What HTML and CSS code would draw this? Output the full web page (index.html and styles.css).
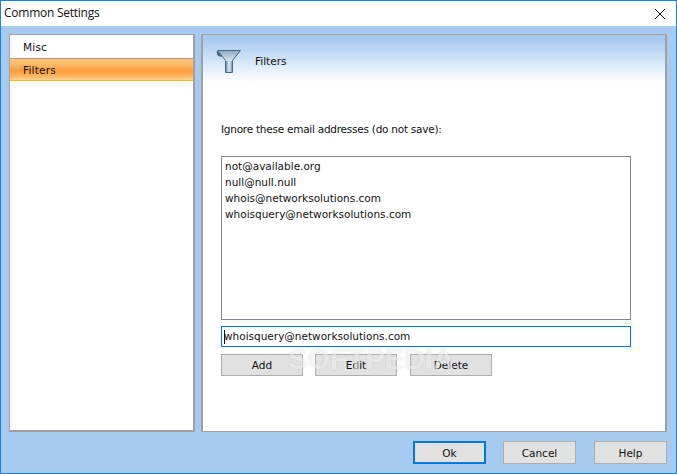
FILE: index.html
```html
<!DOCTYPE html>
<html lang="en">
<head>
<meta charset="utf-8">
<title>Common Settings</title>
<link rel="stylesheet" href="styles.css">
</head>
<body>
<div class="dialog">
  <header class="titlebar">
    <span class="title">Common Settings</span>
    <svg class="close" width="10" height="10" viewBox="0 0 10 10"><path d="M0 0L10 10M10 0L0 10" stroke="#111" stroke-width="1" fill="none"/></svg>
  </header>
  <div class="body">
    <div class="panels">
      <nav class="nav">
        <div class="nav-item">Misc</div>
        <div class="nav-item selected">Filters</div>
      </nav>
      <main class="page">
        <div class="page-head">
          <svg class="funnel" width="26" height="25" viewBox="0 0 26 25">
            <defs>
              <linearGradient id="cone" x1="0" y1="0" x2="0" y2="1"><stop offset="0" stop-color="#8fa9c2"/><stop offset="0.5" stop-color="#dfe8f1"/><stop offset="1" stop-color="#b6c8d9"/></linearGradient>
              <linearGradient id="stem" x1="0" y1="0" x2="1" y2="0"><stop offset="0" stop-color="#6f8ca8"/><stop offset="0.5" stop-color="#e4ecf3"/><stop offset="1" stop-color="#86a0b8"/></linearGradient>
            </defs>
            <path d="M1.5 1.5H24.5L16.5 11.5V23.5H9.5V11.5Z" fill="url(#cone)" stroke="#456a8c" stroke-width="1"/>
            <path d="M10 12H16V23H10Z" fill="url(#stem)"/>
            <path d="M1 2C0 5 2 8 6 8L3 3.5Z" fill="#3f6386"/>
          </svg>
          <span class="page-title">Filters</span>
        </div>
        <div class="page-body">
          <p class="label">Ignore these email addresses (do not save):</p>
          <ul class="list">
            <li>not@available.org</li>
            <li>null@null.null</li>
            <li>whois@networksolutions.com</li>
            <li>whoisquery@networksolutions.com</li>
          </ul>
          <div class="input"><span class="caret"></span>whoisquery@networksolutions.com</div>
          <div class="actions">
            <button class="btn action">Add</button>
            <button class="btn action">Edit</button>
            <button class="btn action">Delete</button>
          </div>
          <span class="watermark">SOFTPEDIA</span>
        </div>
      </main>
    </div>
    <footer class="footer">
      <button class="btn foot default">Ok</button>
      <button class="btn foot">Cancel</button>
      <button class="btn foot">Help</button>
    </footer>
  </div>
</div>
</body>
</html>
```
FILE: styles.css
```css
* { box-sizing: border-box; }
html, body { margin: 0; padding: 0; height: 100%; }
body { background: #fff; font-family: "DejaVu Sans", sans-serif; font-size: 10.5px; color: #111; overflow: hidden; }
.dialog { width: 677px; height: 474px; border: 1px solid #1883d7; display: flex; flex-direction: column; }
.titlebar { height: 25px; flex: none; background: #fff; display: flex; align-items: center; justify-content: space-between; padding: 0 11px 2px 3px; }
.title { font-family: "Open Sans", sans-serif; font-size: 12px; letter-spacing: -.25px; }
.close { display: block; margin-top: 2px; }
.body { flex: 1; background: #a6caf0; padding: 8px 9px 9px 8px; display: flex; flex-direction: column; }
.panels { display: flex; gap: 6px; height: 398px; flex: none; }
.nav { width: 186px; background: #fff; border: 1px solid #a0a0a0; border-width: 1px 2px 2px 1px; }
.nav-item { height: 24px; padding-left: 13px; line-height: 25px; letter-spacing: .2px; }
.nav-item:first-child { border-bottom: 1px solid #a89a88; }
.nav-item.selected { height: 22px; line-height: 22px; border-bottom: 1px solid #fdb41e; background: linear-gradient(#fec77e 0, #feb765 30%, #fe9d3c 55%, #feae55 75%, #ffd18f 100%); }
.page { flex: 1; background: #fff; border: 1px solid #a0a0a0; border-width: 1px 2px 1px 2px; display: flex; flex-direction: column; }
.page-head { height: 47px; flex: none; display: flex; align-items: center; padding: 5px 0 0 13px; gap: 13px; background: linear-gradient(#a6caf0 0, #a6caf0 8%, #ffffff 100%); }
.funnel { display: block; }
.page-body { position: relative; flex: 1; padding: 0 34px 0 18px; }
.label { margin: 41px 0 0; height: 13px; line-height: 13px; letter-spacing: -.25px; }
.list { list-style: none; margin: 20px 0 0; padding: 1px 3px; height: 164px; border: 1px solid #828790; background: #fff; }
.list li { height: 16px; line-height: 16px; }
.input { position: relative; height: 21px; margin-top: 6px; border: 1px solid #0078d7; padding-left: 2px; line-height: 19px; }
.caret { position: absolute; left: 2px; top: 3px; width: 1px; height: 14px; background: #111; }
.actions { display: flex; gap: 12px; margin-top: 7px; }
.actions .action:last-child { margin-left: 1px; }
.btn { font-family: inherit; font-size: inherit; color: #111; background: #e1e1e1; border: 1px solid #adadad; padding: 0; border-radius: 0; }
.action { width: 82px; height: 22px; }
.watermark { position: absolute; left: 85px; top: 262px; font-family: "Liberation Sans", sans-serif; font-weight: bold; font-size: 29px; line-height: 30px; color: rgba(255,255,255,.55); text-shadow: 0 0 2px rgba(0,0,0,.1); pointer-events: none; }
.footer { display: flex; justify-content: flex-end; gap: 17px; margin-top: 9px; }
.foot { width: 73px; height: 23px; }
.foot:last-child { margin-left: 1px; }
.default { border: 2px solid #0078d7; }
```
